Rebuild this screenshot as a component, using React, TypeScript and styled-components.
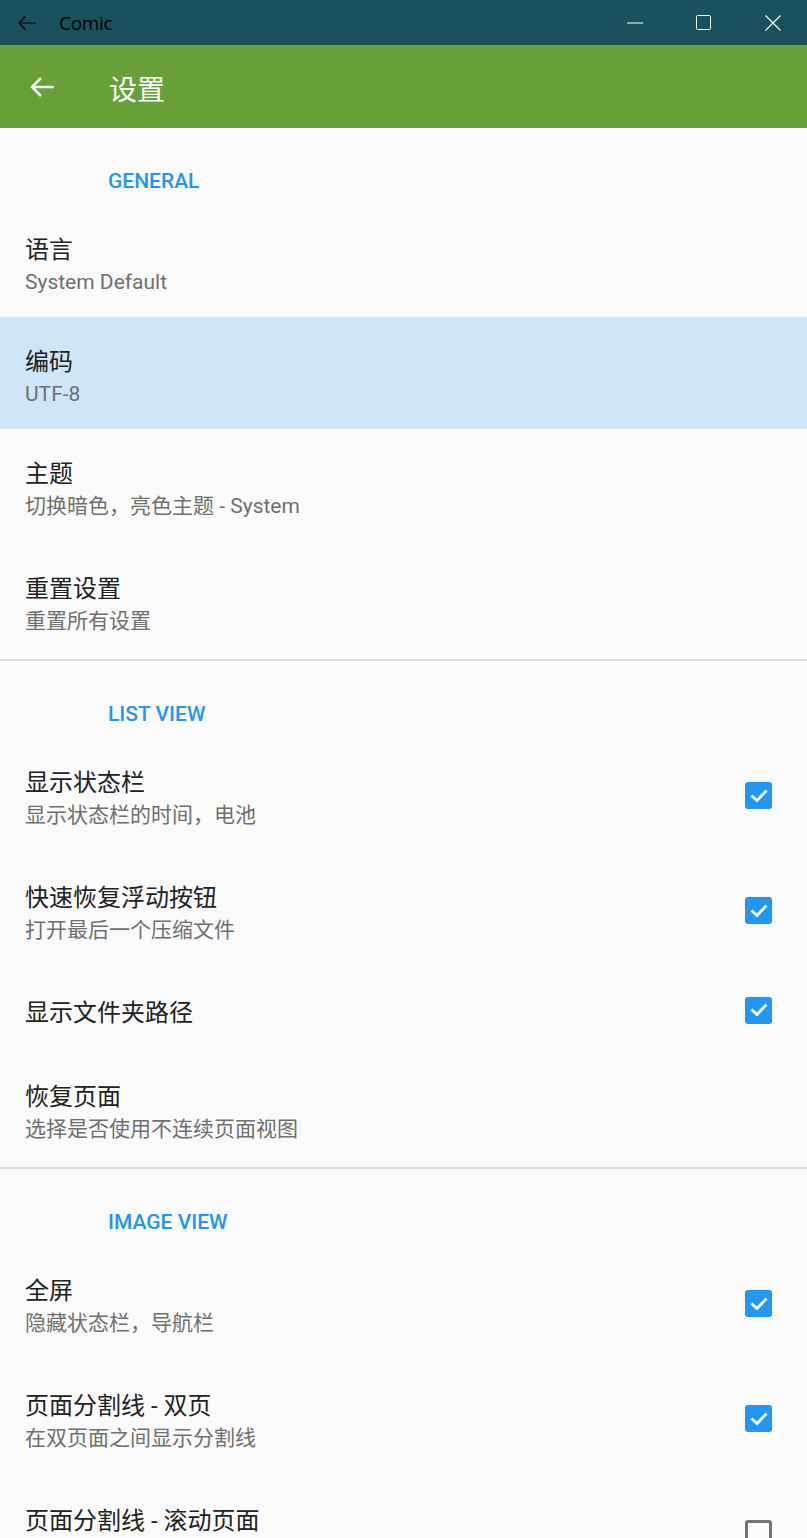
import React from "react";
import styled, { createGlobalStyle } from "styled-components";

const GlobalStyle = createGlobalStyle`
  html, body {
    margin: 0;
    padding: 0;
    overflow: hidden;
    background: #fafafa;
  }
  body {
    font-family: Roboto, "Noto Sans CJK SC", sans-serif;
  }
`;

const Page = styled.div`
  width: 807px;
  height: 1538px;
  overflow: hidden;
  background: #fafafa;
  display: flex;
  flex-direction: column;
`;

const TitleBar = styled.div`
  height: 45px;
  flex: none;
  background: #1a515c;
  display: flex;
  align-items: center;
`;

const TitleBarBack = styled.div`
  width: 54px;
  height: 45px;
  display: flex;
  align-items: center;
  padding-left: 17px;
  box-sizing: border-box;
`;

const AppName = styled.div`
  font-family: "Open Sans", "Noto Sans", sans-serif;
  font-size: 19px;
  color: #000;
  margin-left: 5px;
  flex: 1;
  letter-spacing: -0.3px;
`;

const WinButton = styled.div`
  width: 69px;
  height: 45px;
  display: flex;
  align-items: center;
  justify-content: center;
`;

const AppBar = styled.div`
  height: 83px;
  flex: none;
  background: #67a038;
  display: flex;
  align-items: center;
`;

const AppBarBack = styled.div`
  width: 109px;
  height: 83px;
  display: flex;
  align-items: center;
  padding-left: 29px;
  box-sizing: border-box;
`;

const AppTitle = styled.div`
  font-family: "Noto Sans CJK SC", sans-serif;
  font-size: 28px;
  color: #fff;
  line-height: 34px;
  margin-top: 2px;
`;

const Content = styled.div`
  display: flex;
  flex-direction: column;
`;

const SectionHeader = styled.div`
  height: 77px;
  box-sizing: border-box;
  padding: 41px 0 0 108px;
  font-family: Roboto, sans-serif;
  font-weight: 500;
  font-size: 21px;
  line-height: 24px;
  color: #2196f3;
`;

const Divider = styled.div`
  height: 2px;
  background: #dcdcdc;
`;

const Row = styled.div<{ $h: number; $active?: boolean }>`
  height: ${(p) => p.$h}px;
  box-sizing: border-box;
  padding: 30px 35px 0 25px;
  display: flex;
  align-items: flex-start;
  background: ${(p) => (p.$active ? "#cfe5f8" : "transparent")};
`;

const RowText = styled.div`
  flex: 1;
  display: flex;
  flex-direction: column;
`;

const ItemTitle = styled.div`
  font-family: Roboto, "Noto Sans CJK SC", sans-serif;
  font-size: 24px;
  line-height: 30px;
  color: #212121;
`;

const ItemSub = styled.div`
  font-family: Roboto, "Noto Sans CJK SC", sans-serif;
  font-size: 21px;
  line-height: 34px;
  color: #6f6f6f;
`;

const CheckSlot = styled.div`
  align-self: center;
  margin-top: -30px;
  width: 27px;
  height: 27px;
  display: flex;
`;

const CheckBoxOn = styled.div`
  width: 27px;
  height: 27px;
  border-radius: 3px;
  background: #2196f3;
  display: flex;
  align-items: center;
  justify-content: center;
`;

const CheckBoxOff = styled.div`
  width: 27px;
  height: 27px;
  box-sizing: border-box;
  border-radius: 3px;
  border: 3px solid #737373;
`;

type Item = {
  title: string;
  sub?: string;
  check?: boolean;
  active?: boolean;
  h: number;
};

const Check = ({ on }: { on: boolean }) => (
  <CheckSlot>
    {on ? (
      <CheckBoxOn>
        <svg width="20" height="20" viewBox="0 0 20 20">
          <path d="M3.5 10.5 L8 14.5 L16.5 5.5" fill="none" stroke="#fff" strokeWidth="2.8" strokeLinecap="square" />
        </svg>
      </CheckBoxOn>
    ) : (
      <CheckBoxOff />
    )}
  </CheckSlot>
);

const SettingRow = ({ item }: { item: Item }) => (
  <Row $h={item.h} $active={item.active}>
    <RowText>
      <ItemTitle>{item.title}</ItemTitle>
      {item.sub && <ItemSub>{item.sub}</ItemSub>}
    </RowText>
    {item.check !== undefined && <Check on={item.check} />}
  </Row>
);

const general: Item[] = [
  { title: "语言", sub: "System Default", h: 112 },
  { title: "编码", sub: "UTF-8", h: 112, active: true },
  { title: "主题", sub: "切换暗色，亮色主题 - System", h: 115 },
  { title: "重置设置", sub: "重置所有设置", h: 115 },
];

const listView: Item[] = [
  { title: "显示状态栏", sub: "显示状态栏的时间，电池", check: true, h: 115 },
  { title: "快速恢复浮动按钮", sub: "打开最后一个压缩文件", check: true, h: 115 },
  { title: "显示文件夹路径", check: true, h: 84 },
  { title: "恢复页面", sub: "选择是否使用不连续页面视图", h: 115 },
];

const imageView: Item[] = [
  { title: "全屏", sub: "隐藏状态栏，导航栏", check: true, h: 115 },
  { title: "页面分割线 - 双页", sub: "在双页面之间显示分割线", check: true, h: 115 },
  { title: "页面分割线 - 滚动页面", check: false, h: 115 },
];

export default function App() {
  return (
    <Page>
      <GlobalStyle />
      <TitleBar>
        <TitleBarBack>
          <svg width="20" height="16" viewBox="0 0 20 16">
            <path d="M19 8 H2 M8.5 1.5 L2 8 L8.5 14.5" fill="none" stroke="#000" strokeWidth="1.2" />
          </svg>
        </TitleBarBack>
        <AppName>Comic</AppName>
        <WinButton>
          <svg width="16" height="2" viewBox="0 0 16 2">
            <path d="M0 1 H16" stroke="#fff" strokeWidth="1" />
          </svg>
        </WinButton>
        <WinButton>
          <svg width="15" height="15" viewBox="0 0 15 15">
            <rect x="0.5" y="0.5" width="14" height="14" rx="1" fill="none" stroke="#fff" strokeWidth="1" />
          </svg>
        </WinButton>
        <WinButton>
          <svg width="16" height="16" viewBox="0 0 16 16">
            <path d="M0.5 0.5 L15.5 15.5 M15.5 0.5 L0.5 15.5" stroke="#fff" strokeWidth="1.1" />
          </svg>
        </WinButton>
      </TitleBar>
      <AppBar>
        <AppBarBack>
          <svg width="26" height="22" viewBox="0 0 26 22">
            <path d="M25 11 H3 M12 2 L3 11 L12 20" fill="none" stroke="#f2f2f2" strokeWidth="2.6" />
          </svg>
        </AppBarBack>
        <AppTitle>设置</AppTitle>
      </AppBar>
      <Content>
        <SectionHeader>GENERAL</SectionHeader>
        {general.map((it) => (
          <SettingRow key={it.title} item={it} />
        ))}
        <Divider />
        <SectionHeader>LIST VIEW</SectionHeader>
        {listView.map((it) => (
          <SettingRow key={it.title} item={it} />
        ))}
        <Divider />
        <SectionHeader>IMAGE VIEW</SectionHeader>
        {imageView.map((it) => (
          <SettingRow key={it.title} item={it} />
        ))}
      </Content>
    </Page>
  );
}
